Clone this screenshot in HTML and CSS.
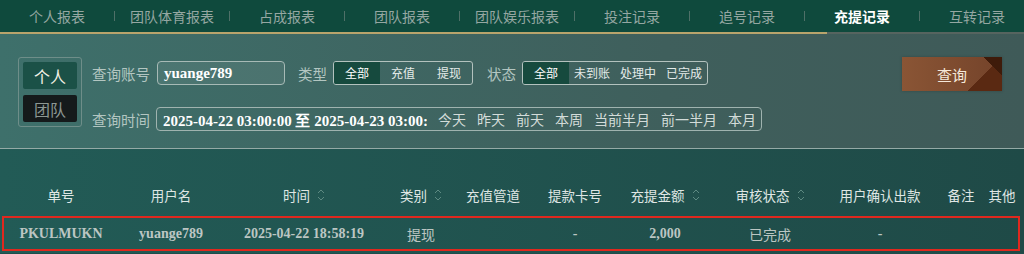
FILE: index.html
```html
<!DOCTYPE html>
<html lang="zh-CN">
<head>
    <meta charset="UTF-8">
    <meta name="viewport" content="width=device-width, initial-scale=1.0">
    <title>充提记录</title>
    <link rel="stylesheet" href="styles.css">
</head>
<body>
    <nav class="nav">
        <a class="nav-item">个人报表</a><span class="sep"></span>
        <a class="nav-item">团队体育报表</a><span class="sep"></span>
        <a class="nav-item">占成报表</a><span class="sep"></span>
        <a class="nav-item">团队报表</a><span class="sep"></span>
        <a class="nav-item">团队娱乐报表</a><span class="sep"></span>
        <a class="nav-item">投注记录</a><span class="sep"></span>
        <a class="nav-item">追号记录</a><span class="sep"></span>
        <a class="nav-item active">充提记录</a><span class="sep"></span>
        <a class="nav-item">互转记录</a>
    </nav>
    <div class="nav-line"></div>

    <section class="filter">
        <div class="toggle">
            <button class="toggle-btn on">个人</button>
            <button class="toggle-btn off">团队</button>
        </div>

        <div class="fields">
            <div class="field-row">
                <label class="label">查询账号</label>
                <div class="input-account">yuange789</div>
                <label class="label label-type">类型</label>
                <div class="seg">
                    <span class="seg-item active">全部</span>
                    <span class="seg-item">充值</span>
                    <span class="seg-item">提现</span>
                </div>
                <label class="label label-state">状态</label>
                <div class="seg">
                    <span class="seg-item active">全部</span>
                    <span class="seg-item">未到账</span>
                    <span class="seg-item">处理中</span>
                    <span class="seg-item">已完成</span>
                </div>
            </div>
            <div class="field-row row-time">
                <label class="label">查询时间</label>
                <div class="date-box">
                    <span class="date-text">2025-04-22 03:00:00 至 2025-04-23 03:00:00</span>
                    <span class="quick">今天</span>
                    <span class="quick">昨天</span>
                    <span class="quick">前天</span>
                    <span class="quick">本周</span>
                    <span class="quick">当前半月</span>
                    <span class="quick">前一半月</span>
                    <span class="quick">本月</span>
                </div>
            </div>
        </div>

        <button class="search-btn">查询</button>
    </section>

    <section class="table">
        <div class="tr th">
            <div>单号</div>
            <div>用户名</div>
            <div class="sort">时间<svg width="8" height="14" viewBox="0 0 8 14"><path d="M1 5 L4 2 L7 5 M1 9 L4 12 L7 9" fill="none" stroke="#5d8a82" stroke-width="1"/></svg></div>
            <div class="sort">类别<svg width="8" height="14" viewBox="0 0 8 14"><path d="M1 5 L4 2 L7 5 M1 9 L4 12 L7 9" fill="none" stroke="#5d8a82" stroke-width="1"/></svg></div>
            <div>充值管道</div>
            <div>提款卡号</div>
            <div class="sort">充提金额<svg width="8" height="14" viewBox="0 0 8 14"><path d="M1 5 L4 2 L7 5 M1 9 L4 12 L7 9" fill="none" stroke="#5d8a82" stroke-width="1"/></svg></div>
            <div class="sort">审核状态<svg width="8" height="14" viewBox="0 0 8 14"><path d="M1 5 L4 2 L7 5 M1 9 L4 12 L7 9" fill="none" stroke="#5d8a82" stroke-width="1"/></svg></div>
            <div>用户确认出款</div>
            <div>备注</div>
            <div>其他</div>
        </div>
        <div class="tr td">
            <div class="num">PKULMUKN</div>
            <div class="num">yuange789</div>
            <div class="num">2025-04-22 18:58:19</div>
            <div>提现</div>
            <div></div>
            <div class="num">-</div>
            <div class="num">2,000</div>
            <div>已完成</div>
            <div class="num">-</div>
            <div></div>
            <div></div>
        </div>
    </section>
</body>
</html>
```

FILE: styles.css
```css
body {
    margin: 0;
    width: 1024px;
    height: 254px;
    overflow: hidden;
    font-family: "Noto Sans CJK SC", "Noto Sans", sans-serif;
    background-color: #1f4d4a;
}

/* top tabs */
.nav {
    display: flex;
    align-items: center;
    height: 32px;
    background-color: #0f4a3d;
    overflow: hidden;
    white-space: nowrap;
}

.nav-item {
    flex: 0 0 114px;
    text-align: center;
    font-size: 14px;
    color: #95a7a2;
}

.nav-item.active {
    color: #ffffff;
    font-weight: 700;
}

.sep {
    flex: 0 0 1px;
    height: 10px;
    background-color: #4f7068;
}

.nav-line {
    height: 2px;
    background: linear-gradient(90deg, #b9a46c 0, #b9a46c 827px, #56645f 827px);
}

/* filter panel */
.filter {
    display: flex;
    align-items: flex-start;
    height: 115px;
    box-sizing: border-box;
    padding: 23px 0 0 18px;
    background: linear-gradient(90deg, #3e706b, #3f5f5c 65%, #3f5a58);
    border-bottom: 1px solid #95aaa6;
}

.toggle {
    display: flex;
    flex-direction: column;
    gap: 6px;
    width: 64px;
    height: 70px;
    box-sizing: border-box;
    padding: 4px;
    border: 1px solid #6e8e89;
    border-radius: 3px;
}

.toggle-btn {
    height: 28px;
    border: none;
    border-radius: 2px;
    padding: 0;
    font-family: inherit;
    font-size: 16px;
}

.toggle-btn.on {
    background-color: #1b5147;
    color: #f3f1e6;
}

.toggle-btn.off {
    background-color: #151a1b;
    color: #8c9793;
}

.fields {
    display: flex;
    flex-direction: column;
    gap: 22px;
    margin-left: 10px;
    padding-top: 4px;
}

.field-row {
    display: flex;
    align-items: center;
    height: 24px;
}

.label {
    font-size: 14.5px;
    color: #b3c6c1;
    white-space: nowrap;
}

.input-account {
    width: 128px;
    height: 24px;
    box-sizing: border-box;
    margin-left: 7px;
    padding: 0 6px;
    border: 1px solid #a7bab6;
    border-radius: 4px;
    background-color: rgba(255, 255, 255, 0.07);
    font-family: "Liberation Serif", serif;
    font-weight: 700;
    font-size: 15px;
    line-height: 22px;
    color: #ffffff;
}

.label-type {
    margin-left: 13px;
}

.label-state {
    margin-left: 14px;
}

.seg {
    display: flex;
    margin-left: 6px;
    height: 22px;
    border: 1px solid #b3c2be;
    border-radius: 3px;
    overflow: hidden;
}

.seg-item {
    width: 46px;
    text-align: center;
    font-size: 12px;
    line-height: 21px;
    color: #e4ebe9;
}

.seg-item.active {
    background-color: #164a3e;
    color: #ffffff;
}

.date-box {
    display: flex;
    align-items: center;
    gap: 11px;
    width: 606px;
    height: 24px;
    box-sizing: border-box;
    margin-left: 6px;
    padding-left: 6px;
    border: 1px solid #9fb3af;
    border-radius: 4px;
    white-space: nowrap;
}

.date-text {
    flex: 0 0 264px;
    overflow: hidden;
    font-family: "Liberation Serif", serif;
    font-weight: 700;
    font-size: 15px;
    color: #ffffff;
}

.quick {
    font-size: 14px;
    color: #d3dcd9;
}

.search-btn {
    width: 100px;
    height: 34px;
    margin: 0 22px 0 auto;
    border: none;
    padding: 0;
    background:
        linear-gradient(45deg, transparent 86%, #3e1b0a 86%),
        linear-gradient(135deg, transparent 74%, #5a2912 74%),
        linear-gradient(90deg, #8a5535, #74432a);
    font-family: inherit;
    font-size: 15px;
    color: #f5e8da;
    box-shadow: 0 0 3px rgba(0, 0, 0, 0.2);
}

/* table */
.table {
    height: 104px;
    box-sizing: border-box;
    padding-top: 27px;
    background: linear-gradient(90deg, #225b56, #1f4a47);
}

.tr {
    display: grid;
    grid-template-columns: 114px 106px 160px 74px 70px 94px 86px 124px 96px 66px 16px;
    align-items: center;
    width: 1018px;
    box-sizing: border-box;
    margin-left: 2px;
    border: 2px solid transparent;
}

.tr > div {
    display: flex;
    align-items: center;
    justify-content: center;
    white-space: nowrap;
}

.th {
    height: 38px;
    font-size: 13.5px;
    color: #dfe6e4;
}

.sort {
    gap: 7px;
}

.td {
    height: 35px;
    margin-top: 2px;
    border-color: #e0281e;
    font-size: 14px;
    color: #bcc6c3;
}

.num {
    font-family: "Liberation Serif", serif;
    font-weight: 700;
}
```
